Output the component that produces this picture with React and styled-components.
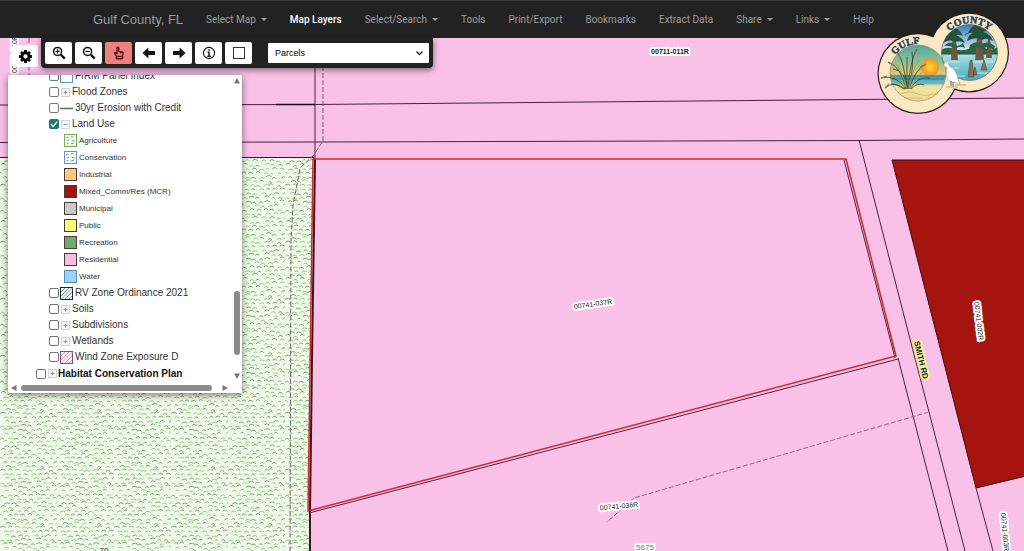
import React from 'react';
import styled, { createGlobalStyle, css } from 'styled-components';

const GlobalStyle = createGlobalStyle`
    * { box-sizing:border-box; }
    body {
        margin:0;
        font-family:"Liberation Sans", Arial, sans-serif;
        color:#333;
    }
    button, select, input { font-family:inherit; }
`;

const Page = styled.div`
    position:relative;
    display:flex;
    flex-direction:column;
    min-height:100vh;
    overflow:hidden;
`;

const NavBar = styled.nav`
    display:flex;
    align-items:center;
    height:38px;
    padding-left:93px;
    background:#222;
    border-top:1px solid #3a3a3a;
    white-space:nowrap;
`;

const Brand = styled.a`
    color:#9d9d9d;
    font-size:13px;
    line-height:16px;
    text-decoration:none;
    margin-right:23px;
`;

const NavList = styled.ul`
    display:flex;
    gap:23px;
    margin:0;
    padding:0;
    list-style-type:none;
`;

const NavLink = styled.a`
    display:flex;
    align-items:center;
    gap:5px;
    font-family:Roboto, "Liberation Sans", sans-serif;
    font-size:10px;
    line-height:16px;
    text-decoration:none;
    color:${p => p.$active ? '#fff' : '#9d9d9d'};
    font-weight:${p => p.$active ? 500 : 400};
`;

const Caret = styled.span`
    border:3px solid transparent;
    border-top-color:currentColor;
    border-bottom:0;
`;

const Stage = styled.main`
    position:relative;
    flex:1;
    background:#f9c0e8;
`;

const MapCanvas = styled.svg`
    position:absolute;
    inset:0;
    width:100%;
    height:100%;
`;

const Toolbar = styled.div`
    position:absolute;
    top:0;
    left:41px;
    display:flex;
    align-items:center;
    gap:3px;
    height:30px;
    padding:0 4px 1px;
    background:#222;
    border-radius:0 0 4px 4px;
    box-shadow:0 2px 6px rgba(0,0,0,0.5);
`;

const ToolBtn = styled.button`
    display:flex;
    align-items:center;
    justify-content:center;
    width:27px;
    height:22px;
    padding:0;
    border:none;
    border-radius:2px;
    color:#111;
    background:${p => p.$active ? '#ee8080' : '#fff'};
    svg { width:14px; height:14px; }
`;

const GearBtn = styled(ToolBtn)`
    position:absolute;
    top:7px;
    left:12px;
    width:26px;
    svg { width:15px; height:15px; }
`;

const SelectWrap = styled.div`
    position:relative;
    margin-left:13px;
    svg {
        position:absolute;
        right:5px;
        top:6px;
        width:9px;
        height:8px;
        pointer-events:none;
    }
`;

const LayerSelect = styled.select`
    display:block;
    appearance:none;
    width:161px;
    height:20px;
    padding:0 7px;
    border:none;
    border-radius:1px;
    background:#fff;
    color:#000;
    font-size:9px;
`;

const Panel = styled.section`
    position:absolute;
    top:37px;
    left:8px;
    width:234px;
    background:#fff;
    border-radius:2px;
    box-shadow:0 2px 7px rgba(0,0,0,0.5);
`;

const PanelBody = styled.div`
    display:flex;
    height:307px;
`;

const Tree = styled.ul`
    flex:1;
    display:flex;
    flex-direction:column;
    justify-content:flex-end;
    margin:0;
    padding:0 0 0 41px;
    overflow:hidden;
    list-style-type:none;
`;

const TreeRow = styled.li`
    flex:none;
    display:flex;
    align-items:center;
    height:16px;
    font-size:10px;
    line-height:16px;
    white-space:nowrap;
    label { padding-left:2px; }
    ${p => p.$root && css`
        height:17px;
        margin-left:-13px;
        font-weight:bold;
        color:#111;
        label { padding-left:1px; }
    `}
`;

const Check = styled.input`
    appearance:none;
    flex:none;
    width:10px;
    height:10px;
    margin:0;
    border:1px solid #767676;
    border-radius:2px;
    background:#fff;
    &:checked {
        border-color:#1f7a6c;
        background:#1f7a6c url("data:image/svg+xml,%3Csvg xmlns='http://www.w3.org/2000/svg' viewBox='0 0 8 8'%3E%3Cpath d='M1 4.2 3.2 6.4 7.2 1.6' fill='none' stroke='white' stroke-width='1.4'/%3E%3C/svg%3E");
    }
`;

const Expander = styled.button`
    display:flex;
    flex:none;
    width:9px;
    height:9px;
    margin:0 0 0 2px;
    padding:0;
    border:1px solid #cfd4d9;
    background:#f7f8f9;
    svg { width:7px; height:7px; }
`;

const LegendRow = styled.li`
    flex:none;
    display:flex;
    align-items:center;
    gap:2px;
    height:17px;
    padding-left:14px;
    font-size:8px;
    line-height:12px;
`;

const Symbol = styled.svg`
    flex:none;
    width:13px;
    height:13px;
    margin-left:1px;
`;

const ScrollColumn = styled.div`
    display:flex;
    flex-direction:column;
    align-items:center;
    width:11px;
    padding:3px 0;
`;

const ScrollRow = styled.div`
    display:flex;
    align-items:center;
    height:11px;
    padding:0 14px 0 3px;
`;

const Thumb = styled.div`
    background:#8b8b8b;
    border-radius:3px;
    ${p => p.$vertical ? css`
        width:6px;
        height:64px;
        margin:auto 0 18px;
    ` : css`
        flex:1;
        height:6px;
        margin:0 10px 0 4px;
    `}
`;

const ArrowIcon = styled.svg`
    flex:none;
    width:6px;
    height:6px;
    fill:#777;
    transform:rotate(${p => p.$turn || 0}deg);
`;

const Seal = styled.svg`
    position:absolute;
    top:12px;
    right:14px;
    width:134px;
    height:103px;
`;

const navItems = [
    { text: 'Select Map', menu: true },
    { text: 'Map Layers', active: true },
    { text: 'Select/Search', menu: true },
    { text: 'Tools' },
    { text: 'Print/Export' },
    { text: 'Bookmarks' },
    { text: 'Extract Data' },
    { text: 'Share', menu: true },
    { text: 'Links', menu: true },
    { text: 'Help' },
];

const legend = [
    { text: 'Agriculture', kind: 'marks', color: '#6fae52' },
    { text: 'Conservation', kind: 'marks', color: '#6a8fd0' },
    { text: 'Industrial', fill: '#fbcb7c' },
    { text: 'Mixed_Comm/Res (MCR)', fill: '#a5140f' },
    { text: 'Municipal', fill: '#c9c9c9' },
    { text: 'Public', fill: '#fdfb74' },
    { text: 'Recreation', fill: '#6caa70' },
    { text: 'Residential', fill: '#f9b9e6' },
    { text: 'Water', fill: '#9ad4fb', color: '#5b8bb5' },
];

// small grass strokes, repeated over the agriculture land
const TILE = 57;
const grass = (() => {
    let seed = 11;
    const rand = () => {
        seed = (seed * 16807) % 2147483647;
        return seed / 2147483647;
    };
    const marks = { dark: '', light: '' };
    for (let row = 0; row < 14; row++) {
        for (let col = 0; col < 8; col++) {
            const x = (col * 7.1 + (row % 3) * 2.3 + rand() * 3 - 1.5).toFixed(1);
            const y = (row * 4.07 + 1.5 + rand() * 2.4).toFixed(1);
            const w = (1 + rand()).toFixed(1);
            const d = `M${x} ${y}l${w}-1h1.4l${w} 1`;
            if (rand() > 0.5) marks.dark += d;
            else marks.light += d;
        }
    }
    return marks;
})();

const SearchIcon = ({ plus }) => (
    <svg viewBox="0 0 14 14" fill="none" stroke="currentColor">
        <circle cx="5.6" cy="5.4" r="4" strokeWidth="1.5" />
        <path d="M8.8 8.6 12.8 12.6" strokeWidth="2.2" />
        <path d={plus ? 'M3.5 5.4h4.2M5.6 3.3v4.2' : 'M3.5 5.4h4.2'} strokeWidth="1.2" />
    </svg>
);

const HandIcon = () => (
    <svg viewBox="0 0 14 14" fill="none" stroke="#5b1414" strokeWidth="1.4" strokeLinejoin="round">
        <path d="M4.6 10.4 2.8 7.6q-.4-1 .6-1.1l1.6 1V2.2q0-1 .9-1t.9 1v3.2l3.4.6q1 .3.9 1.3l-.5 3.1zM4.4 10.6h6.2v2.2H4.4zM8.4 5.8v1.6" />
    </svg>
);

const ArrowTool = ({ right }) => (
    <svg viewBox="0 0 14 14" fill="currentColor">
        <path d={right ? 'M13.500 7 7.600 1.400v3.600H1v4h6.600v3.600z' : 'M.5 7 6.400 1.400v3.600H13v4H6.400v3.600z'} />
    </svg>
);

const InfoIcon = () => (
    <svg viewBox="0 0 14 14" fill="none" stroke="currentColor">
        <circle cx="7" cy="7" r="5.6" strokeWidth="1.1" />
        <path d="M7 3.2v1.5M5.6 6.2H7v4M5.4 10.2h3.3" strokeWidth="1.4" />
    </svg>
);

const BoxIcon = () => (
    <svg viewBox="0 0 14 14" fill="none" stroke="#333">
        <rect x="1.5" y="1.5" width="11" height="11" />
    </svg>
);

const GearIcon = () => (
    <svg viewBox="-7 -7 14 14" fill="none" stroke="#000">
        <circle r="3.3" strokeWidth="2.6" />
        <path d="M0-6V-4M0 6V4M-6 0H-4M6 0H4M-4.2-4.2-3-3M4.2 4.2 3 3M-4.2 4.2-3 3M4.2-4.2 3-3" strokeWidth="2.6" />
    </svg>
);

const Arrow = ({ turn }) => (
    <ArrowIcon viewBox="0 0 6 6" $turn={turn}><path d="M3 0 6 5.5H0z" /></ArrowIcon>
);

const LegendSymbol = ({ kind, fill, color }) => (
    <Symbol viewBox="0 0 13 13">
        <rect x=".5" y=".5" width="12" height="12" fill={fill || '#f9fdf8'} stroke={color || '#4a3c34'} />
        {kind && <path d="M2 4q1-1.500 2.500-.5M7 3q1-1 2.500 0M3 7l2-1M8 6.500l2.500.5M2.500 10l2-.5M7 10l3-1" fill="none" stroke={color} />}
    </Symbol>
);

const HatchSymbol = ({ line, border }) => (
    <Symbol viewBox="0 0 13 13">
        <rect x=".5" y=".5" width="12" height="12" fill="#fff" stroke={border} />
        <path d="M1 5 5 1M1 9 9 1M1 12.500 12.500 1M5 12 12 5M9 12 12 9" stroke={line} />
    </Symbol>
);

const LineSymbol = () => (
    <Symbol viewBox="0 0 13 13"><path d="M0 6.500h13" stroke="#4d7a4a" strokeWidth="1.500" /></Symbol>
);

const TreeItem = ({ id, text, open, checked, symbol, root }) => (
    <TreeRow $root={root}>
        <Check type="checkbox" id={id} defaultChecked={checked} />
        {symbol || (
            <Expander type="button" aria-label={`Toggle ${text}`}>
                <svg viewBox="0 0 7 7" stroke="#8492a0">
                    <path d={open ? 'M1.500 3.500h4' : 'M1.500 3.500h4M3.500 1.500v4'} />
                </svg>
            </Expander>
        )}
        <label htmlFor={id}>{text}</label>
    </TreeRow>
);

const MapLabel = ({ x, y, turn = 0, halo = '#fff', fill = '#222', size = 7, weight = 400, children }) => (
    <text
        x={x}
        y={y}
        transform={`rotate(${turn} ${x} ${y})`}
        fill={fill}
        stroke={halo}
        strokeWidth="4"
        strokeLinejoin="round"
        paintOrder="stroke"
        textAnchor="middle"
        dominantBaseline="central"
        fontFamily="Liberation Sans, Arial, sans-serif"
        fontWeight={weight}
        fontSize={size}
    >
        {children}
    </text>
);

const ParcelMap = () => (
    <MapCanvas viewBox="0 38 1024 513" preserveAspectRatio="xMinYMin slice">
        <defs>
            <pattern id="grass" width={TILE} height={TILE} patternUnits="userSpaceOnUse">
                <rect width={TILE} height={TILE} fill="#effae8" />
                <path d={grass.dark} fill="none" stroke="#7b9a72" strokeWidth="1" />
                <path d={grass.light} fill="none" stroke="#93c684" strokeWidth="1" />
            </pattern>
        </defs>
        <rect y="38" width="1024" height="513" fill="#f9c0e8" />
        <path d="M0 157H314L312 300 308 511 310 551H0z" fill="url(#grass)" />
        <path d="M892 160H1026V476L976 488z" fill="#a5140f" stroke="#3c0b12" />

        <g fill="none" stroke="#4a2344">
            <path d="M0 105 315 104.500 1024 98" />
            <path d="M0 142.500 315 142 859 140.500 1024 139" />
            <path d="M859 140 911 343 929 412 965 551" />
            <path d="M898 358 913 416 948 551" />
            <path d="M976 488 993 551" />
            <path d="M315 38V159" />
            <path d="M0 157.500H314" stroke="#222" />
            <path d="M276 104.500H315" stroke="#111" strokeWidth="1.500" />
            <path d="M315 159 312 360 310 511V551" stroke="#3a1820" strokeWidth="2" />
            <path d="M844 160 895 358M898 359 309 513" />
        </g>
        <g fill="none" stroke="#7d5a76" strokeDasharray="5 2">
            <path d="M29 38V157" />
            <path d="M323 38V141L313 156 300 168 296 190 293 205 291 240 290 551" />
            <path d="M929 412 634 498 607 522" stroke="#a35f8e" />
        </g>
        <path d="M313 159H846L896 356 308 511z" fill="none" stroke="#d0272b" strokeWidth="1.500" />

        <MapLabel x={670} y={51} weight={700}>00711-011R</MapLabel>
        <MapLabel x={593} y={304} turn={-8}>00741-037R</MapLabel>
        <MapLabel x={619} y={506} turn={-5}>00741-036R</MapLabel>
        <MapLabel x={979} y={321} turn={83}>00741-002R</MapLabel>
        <MapLabel x={1005} y={532} turn={85}>00741-003R</MapLabel>
        <MapLabel x={14} y={54} turn={-90}>00711-010R</MapLabel>
        <MapLabel x={921} y={360} turn={76} halo="#f3eca0" size={8} weight={700}>SMITH RD</MapLabel>
        <MapLabel x={645} y={547} size={8} fill="#777">5675</MapLabel>
        <MapLabel x={104} y={550} size={8} halo="#f0fbe9">70</MapLabel>
    </MapCanvas>
);

const CountySeal = () => (
    <Seal viewBox="876 12 134 103" role="img" aria-label="Gulf County">
        <defs>
            <linearGradient id="sunset" x1="0" y1="0" x2="0" y2="1">
                <stop offset="0" stopColor="#4aa89a" />
                <stop offset=".3" stopColor="#8cbf9a" />
                <stop offset=".52" stopColor="#e8c66a" />
                <stop offset=".56" stopColor="#4b9fb4" />
                <stop offset=".68" stopColor="#6db9be" />
                <stop offset=".72" stopColor="#f3e2a0" />
                <stop offset="1" stopColor="#f0dc94" />
            </linearGradient>
            <linearGradient id="swamp" x1="0" y1="0" x2="0" y2="1">
                <stop offset="0" stopColor="#2c6fb0" />
                <stop offset=".48" stopColor="#d5ebf2" />
                <stop offset=".56" stopColor="#a8dbe2" />
                <stop offset="1" stopColor="#3fa9bd" />
            </linearGradient>
            <radialGradient id="sun">
                <stop offset="0" stopColor="#ffd93a" />
                <stop offset="1" stopColor="#f2931e" />
            </radialGradient>
            <clipPath id="beachClip"><circle cx="918" cy="73" r="28" /></clipPath>
            <clipPath id="swampClip"><circle cx="969.500" cy="52.500" r="28" /></clipPath>
            <path id="arcLeft" d="M895 55A29.500 29.500 0 0 1 933 48" />
            <path id="arcRight" d="M949.500 31.500A29.500 29.500 0 0 1 996 39" />
        </defs>
        <g fill="#2a1a14">
            <circle cx="918" cy="73.500" r="40.500" />
            <circle cx="969" cy="52.500" r="40" />
        </g>
        <g fill="#fbe9c6">
            <circle cx="918" cy="73.500" r="39.300" />
            <circle cx="969" cy="52.500" r="38.800" />
        </g>

        <g clipPath="url(#beachClip)">
            <rect x="889" y="44" width="58" height="58" fill="url(#sunset)" />
            <circle cx="930" cy="67" r="9" fill="url(#sun)" />
            <path d="M889 76h58M892 79h52" stroke="#2f7f98" />
            <path d="M900 94q10-4 18 0t24-3M905 98h18" fill="none" stroke="#c9ad62" strokeWidth=".7" />
        </g>
        <circle cx="918" cy="73" r="28" fill="none" stroke="#8b7a55" strokeWidth=".6" />
        <g fill="none" stroke="#33462a" strokeWidth=".8">
            <path d="M906 89Q901 66 888 62M907 89Q904 62 898 53M908 89Q910 60 917 49M909 89Q916 68 926 64M906 89Q896 74 881 78M905 89Q894 80 885 88M910 89Q918 76 930 78M907 89V57M908 89Q905 70 893 69M909 89Q914 66 912 52M904 89Q898 84 891 84M911 89Q918 82 924 85" />
        </g>
        <path d="M907 89Q902 72 896 64M909 89Q912 70 919 60M907 88Q899 77 890 74M910 88Q917 78 922 72" fill="none" stroke="#8ba352" strokeWidth=".9" />
        <path d="M881 78l6-2M888 62l5 3M917 49l-3 7M926 64l-6 3M898 53l3 7M885 88l4-4" stroke="#8a744c" strokeWidth="1.300" />

        <g clipPath="url(#swampClip)">
            <rect x="941" y="22" width="57" height="60" fill="url(#swamp)" />
            <path d="M941 50q7-4 14-1t16-1 14 0 13-1v7h-57z" fill="#29683f" />
            <path d="M941 54h57" stroke="#1f4f4a" />
            <path d="M951 60 953 30h2l3 30zM975 60 978 26h3l3 34zM986 58 988 38h2l2 20z" fill="#70573e" />
            <path d="M945 35q3-8 8-8 6 1 10 9-4-2-7-1 7 3 9 8-6-3-10-1-6-4-13 2 0-5 4-7-4 0-7 2 2-5 6-4zM968 33q4-9 11-9 8 1 12 8-5-2-8 0 8 2 10 9-6-4-11-1-7-4-15 1 1-6 6-8-5-1-8 3 0-3 3-3z" fill="#24503e" />
            <path d="M944 46q6-6 10-2t9-1l2 5q-6-3-9 1-6-4-12-3zM970 45q6-5 11-1 7-4 14 2l-1 4q-7-5-12-1-6-3-13 0z" fill="#2f6247" />
            <path d="M947 62h13M971 62h22M950 68h9M976 73h18M957 76h8" stroke="#d4f1f3" strokeWidth=".8" />
            <path d="M968 77 970 61l2-1 2 17zM973 75l2-8 2 8zM981 70l3-10 3 10z" fill="#8a7250" stroke="#443726" strokeWidth=".5" />
        </g>
        <circle cx="969.500" cy="52.500" r="28" fill="none" stroke="#4a5b50" strokeWidth=".6" />

        <path d="M944 64q1-3 4-2l1 4q8 4 9 13l2 6-5-3q-6 1-8-5-1-5 0-9l-3-2z" fill="#fff" stroke="#888" strokeWidth=".5" />
        <path d="M953 82v5M951 81v5" stroke="#333" strokeWidth=".7" />
        <path d="M946 87h12M955 85h11" stroke="#a99a72" strokeWidth=".8" />
        <g fill="#1c3f66" stroke="#1c3f66" strokeWidth=".5" fontFamily="Liberation Serif, serif" fontWeight="bold" fontSize="10">
            <text><textPath href="#arcLeft">GULF</textPath></text>
            <text><textPath href="#arcRight">COUNTY</textPath></text>
        </g>
    </Seal>
);

const App = () => {
    return <Page>
        <GlobalStyle />
        <NavBar>
            <Brand href="#">Gulf County, FL</Brand>
            <NavList>
                {navItems.map(item => (
                    <li key={item.text}>
                        <NavLink href="#" $active={item.active}>
                            {item.text}
                            {item.menu && <Caret />}
                        </NavLink>
                    </li>
                ))}
            </NavList>
        </NavBar>
        <Stage>
            <ParcelMap />
            <GearBtn type="button" aria-label="Settings"><GearIcon /></GearBtn>
            <Panel>
                <PanelBody>
                    <Tree>
                        <TreeItem id="firm" text="FIRM Panel Index" symbol={<LegendSymbol fill="#fff" color="#5b8bd0" />} />
                        <TreeItem id="flood" text="Flood Zones" />
                        <TreeItem id="erosion" text="30yr Erosion with Credit" symbol={<LineSymbol />} />
                        <TreeItem id="landuse" text="Land Use" open checked />
                        {legend.map(item => (
                            <LegendRow key={item.text}>
                                <LegendSymbol {...item} />
                                {item.text}
                            </LegendRow>
                        ))}
                        <TreeItem id="rv" text="RV Zone Ordinance 2021" symbol={<HatchSymbol line="#5b93a8" border="#222" />} />
                        <TreeItem id="soils" text="Soils" />
                        <TreeItem id="subdivisions" text="Subdivisions" />
                        <TreeItem id="wetlands" text="Wetlands" />
                        <TreeItem id="wind" text="Wind Zone Exposure D" symbol={<HatchSymbol line="#e08ac0" border="#8a4a78" />} />
                        <TreeItem id="habitat" text="Habitat Conservation Plan" root />
                    </Tree>
                    <ScrollColumn>
                        <Arrow />
                        <Thumb $vertical />
                        <Arrow turn={180} />
                    </ScrollColumn>
                </PanelBody>
                <ScrollRow>
                    <Arrow turn={-90} />
                    <Thumb />
                    <Arrow turn={90} />
                </ScrollRow>
            </Panel>
            <Toolbar>
                <ToolBtn type="button" aria-label="Zoom in"><SearchIcon plus /></ToolBtn>
                <ToolBtn type="button" aria-label="Zoom out"><SearchIcon /></ToolBtn>
                <ToolBtn type="button" aria-label="Pan" $active><HandIcon /></ToolBtn>
                <ToolBtn type="button" aria-label="Previous view"><ArrowTool /></ToolBtn>
                <ToolBtn type="button" aria-label="Next view"><ArrowTool right /></ToolBtn>
                <ToolBtn type="button" aria-label="Identify"><InfoIcon /></ToolBtn>
                <ToolBtn type="button" aria-label="Select area"><BoxIcon /></ToolBtn>
                <SelectWrap>
                    <LayerSelect aria-label="Active layer" defaultValue="Parcels">
                        <option>Parcels</option>
                    </LayerSelect>
                    <svg viewBox="0 0 9 8" fill="none" stroke="#222" strokeWidth="1.300"><path d="M1.500 2.500 4.500 5.500 7.500 2.500" /></svg>
                </SelectWrap>
            </Toolbar>
        </Stage>
        <CountySeal />
    </Page>
}

export default App
